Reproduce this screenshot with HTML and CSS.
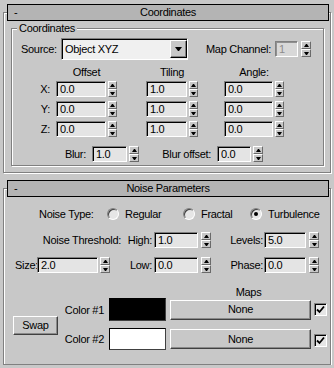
FILE: index.html
```html
<!DOCTYPE html>
<html lang="en">
<head>
    <meta charset="UTF-8">
    <title>Noise - Material Editor</title>
    <link rel="stylesheet" href="styles.css">
</head>
<body>

    <!-- Coordinates rollout -->
    <div class="rollout">
        <div class="rollout-head"><span class="toggle">-</span><span class="title">Coordinates</span><span></span></div>

        <fieldset class="group">
            <legend>Coordinates</legend>

            <div class="source-row">
                <span class="src-label">Source:</span>
                <div class="dropdown"><span>Object XYZ</span><span class="drop-btn"></span></div>
                <span class="chan-label">Map Channel:</span>
                <div class="field loose">
                    <input class="num w-chan" value="1" disabled>
                    <span class="spin wide"><i class="up"></i><i class="down"></i></span>
                </div>
            </div>

            <div class="xyz">
                <span></span>
                <span class="col-head w-offset-f">Offset</span>
                <span class="col-head w-tiling-f">Tiling</span>
                <span class="col-head w-angle-f">Angle:</span>

                <span class="axis">X:</span>
                <div class="field"><input class="num w-offset" value="0.0"><span class="spin"><i class="up"></i><i class="down"></i></span></div>
                <div class="field"><input class="num w-tiling" value="1.0"><span class="spin"><i class="up"></i><i class="down"></i></span></div>
                <div class="field"><input class="num w-angle" value="0.0"><span class="spin"><i class="up"></i><i class="down"></i></span></div>

                <span class="axis">Y:</span>
                <div class="field"><input class="num w-offset" value="0.0"><span class="spin"><i class="up"></i><i class="down"></i></span></div>
                <div class="field"><input class="num w-tiling" value="1.0"><span class="spin"><i class="up"></i><i class="down"></i></span></div>
                <div class="field"><input class="num w-angle" value="0.0"><span class="spin"><i class="up"></i><i class="down"></i></span></div>

                <span class="axis">Z:</span>
                <div class="field"><input class="num w-offset" value="0.0"><span class="spin"><i class="up"></i><i class="down"></i></span></div>
                <div class="field"><input class="num w-tiling" value="1.0"><span class="spin"><i class="up"></i><i class="down"></i></span></div>
                <div class="field"><input class="num w-angle" value="0.0"><span class="spin"><i class="up"></i><i class="down"></i></span></div>
            </div>

            <div class="blur-row">
                <span class="blur-label">Blur:</span>
                <div class="field"><input class="num w-blur" value="1.0"><span class="spin wide"><i class="up"></i><i class="down"></i></span></div>
                <span class="blur-off-label">Blur offset:</span>
                <div class="field"><input class="num w-blur-off" value="0.0"><span class="spin wide"><i class="up"></i><i class="down"></i></span></div>
            </div>
        </fieldset>
    </div>

    <!-- Noise Parameters rollout -->
    <div class="rollout second">
        <div class="rollout-head"><span class="toggle">-</span><span class="title">Noise Parameters</span><span></span></div>

        <div class="type-row">
            <span class="type-label">Noise Type:</span>
            <label class="option w-regular"><span class="radio"></span>Regular</label>
            <label class="option w-fractal"><span class="radio"></span>Fractal</label>
            <label class="option"><span class="radio checked"></span>Turbulence</label>
        </div>

        <div class="params">
            <span class="right pr-thresh">Noise Threshold:</span>
            <span class="right pr-hl">High:</span>
            <div class="field loose"><input class="num w-thresh" value="1.0"><span class="spin wide"><i class="up"></i><i class="down"></i></span></div>
            <span class="right pr-lp">Levels:</span>
            <div class="field loose"><input class="num w-levels" value="5.0"><span class="spin wide"><i class="up"></i><i class="down"></i></span></div>

            <div class="size-cell">
                <span class="size-label">Size:</span>
                <div class="field"><input class="num w-size" value="2.0"><span class="spin wide"><i class="up"></i><i class="down"></i></span></div>
            </div>
            <span class="right pr-hl">Low:</span>
            <div class="field loose"><input class="num w-thresh" value="0.0"><span class="spin wide"><i class="up"></i><i class="down"></i></span></div>
            <span class="right pr-lp">Phase:</span>
            <div class="field loose"><input class="num w-levels" value="0.0"><span class="spin wide"><i class="up"></i><i class="down"></i></span></div>
        </div>

        <div class="colors">
            <span class="maps-head">Maps</span>

            <button class="btn swap">Swap</button>

            <span class="color-label">Color #1</span>
            <span class="swatch black"></span>
            <button class="btn map-btn">None</button>
            <span class="check"><svg width="9" height="9" viewBox="0 0 9 9"><path d="M1 4.5 L3.5 7 L8 1.5" fill="none" stroke="#000" stroke-width="1.8"/></svg></span>

            <span class="color-label row-2">Color #2</span>
            <span class="swatch white row-2"></span>
            <button class="btn map-btn row-2">None</button>
            <span class="check row-2"><svg width="9" height="9" viewBox="0 0 9 9"><path d="M1 4.5 L3.5 7 L8 1.5" fill="none" stroke="#000" stroke-width="1.8"/></svg></span>
        </div>
    </div>

</body>
</html>
```

FILE: styles.css
```css
/* Base */
* {
    box-sizing: border-box;
}

body {
    margin: 0;
    width: 334px;
    background-color: #c8c8c8;
    font: 11px/13px "Liberation Sans", Arial, sans-serif;
    letter-spacing: -0.3px;
    color: #000;
}

/* Rollout frame (etched) */
.rollout {
    margin: 12px 3px 0;
    padding-bottom: 0;
    border: 1px solid #808080;
    box-shadow: inset 1px 1px 0 #fff, 1px 1px 0 #fff;
}

.rollout.second {
    margin-top: 15px;
    padding-bottom: 14px;
}

.rollout-head {
    display: grid;
    grid-template-columns: 20px 1fr 20px;
    height: 17px;
    margin: -9px 1px 0 3px;
    border: 1px solid #000;
    background-color: #b4b4b4;
    line-height: 15px;
}

.rollout-head .toggle {
    padding-left: 6px;
}

.rollout-head .title {
    text-align: center;
}

/* Group box */
.group {
    margin: 1px 6px 6px 7px;
    padding: 0 0 3px 0;
    min-width: 0;
    border: 1px solid #808080;
    box-shadow: inset 1px 1px 0 #fff, 1px 1px 0 #fff;
}

.group legend {
    margin-left: 5px;
    padding: 0 2px;
    line-height: 13px;
    background-color: #c8c8c8;
}

/* Inputs */
.field {
    display: flex;
    align-items: center;
    gap: 2px;
}

.field.loose {
    gap: 3px;
}

.num {
    height: 16px;
    margin: 0;
    padding: 0 0 0 3px;
    border: 1px solid;
    border-color: #808080 #fff #fff #808080;
    box-shadow: inset 1px 1px 0 #000;
    background-color: #e4e4e4;
    font: inherit;
    letter-spacing: inherit;
    color: #000;
    outline: none;
}

.num:disabled {
    background-color: #d8d8d8;
    box-shadow: inset 1px 1px 0 #909090;
    color: #8c8c8c;
}

.w-chan { width: 23px; }
.w-offset { width: 50px; }
.w-tiling { width: 41px; }
.w-angle { width: 49px; }
.w-blur { width: 35px; }
.w-blur-off { width: 34px; }
.w-thresh { width: 44px; }
.w-levels { width: 42px; }
.w-size { width: 61px; }

/* Spinner buttons */
.spin {
    display: flex;
    flex-direction: column;
    width: 9px;
    height: 16px;
}

.spin.wide {
    width: 10px;
}

.spin i {
    flex: 1;
    display: flex;
    align-items: center;
    justify-content: center;
    border: 1px solid;
    border-color: #fff #6a6a6a #6a6a6a #fff;
    background-color: #c8c8c8;
}

.spin i::before {
    content: "";
    width: 1px;
    border-left: 2px solid transparent;
    border-right: 2px solid transparent;
}

.spin .up::before {
    border-bottom: 3px solid #000;
}

.spin .down::before {
    border-top: 3px solid #000;
}

/* Source row */
.source-row {
    display: flex;
    align-items: center;
    height: 22px;
    margin-top: 3px;
}

.src-label {
    width: 49px;
    padding-left: 9px;
}

.dropdown {
    display: flex;
    align-items: center;
    justify-content: space-between;
    width: 127px;
    height: 22px;
    padding-left: 3px;
    border: 1px solid;
    border-color: #808080 #fff #fff #808080;
    box-shadow: inset 1px 1px 0 #000;
    background-color: #f0f0f0;
}

.drop-btn {
    display: flex;
    align-items: center;
    justify-content: center;
    width: 17px;
    height: 18px;
    border: 1px solid;
    border-color: #fff #000 #000 #fff;
    box-shadow: inset -1px -1px 0 #808080;
    background-color: #c8c8c8;
}

.drop-btn::before {
    content: "";
    width: 1px;
    border-left: 3px solid transparent;
    border-right: 3px solid transparent;
    border-top: 4px solid #000;
}

.chan-label {
    width: 69px;
    margin-left: 18px;
}

/* Offset / Tiling / Angle grid */
.xyz {
    display: grid;
    grid-template-columns: 44px 90px 78px 1fr;
    grid-template-rows: 11px repeat(3, 16px);
    row-gap: 4px;
    margin-top: 6px;
}

.col-head {
    text-align: center;
    white-space: nowrap;
}

.w-offset-f { width: 61px; }
.w-tiling-f { width: 52px; }
.w-angle-f { width: 60px; }

.axis {
    padding-right: 6px;
    text-align: right;
    line-height: 16px;
}

/* Blur row */
.blur-row {
    display: flex;
    align-items: center;
    height: 16px;
    margin-top: 9px;
}

.blur-label {
    width: 80px;
    padding-right: 6px;
    text-align: right;
}

.blur-off-label {
    width: 78px;
    padding-right: 6px;
    text-align: right;
}

/* Noise type */
.type-row {
    display: flex;
    align-items: center;
    height: 16px;
    margin-top: 9px;
    padding-left: 35px;
}

.type-label {
    width: 68px;
}

.option {
    display: flex;
    align-items: center;
}

.w-regular { width: 76px; }
.w-fractal { width: 67px; }

.radio {
    position: relative;
    width: 12px;
    height: 12px;
    margin-right: 6px;
    border: 1px solid;
    border-color: #808080 #fff #fff #808080;
    border-radius: 50%;
    box-shadow: inset 1px 1px 0 #404040;
    background-color: #e6e6e6;
}

.radio.checked::after {
    content: "";
    position: absolute;
    top: 3px;
    left: 3px;
    width: 4px;
    height: 4px;
    border-radius: 50%;
    background-color: #000;
}

/* Threshold / size grid */
.params {
    display: grid;
    grid-template-columns: 121px 29px 57px 53px 55px;
    grid-auto-rows: 16px;
    row-gap: 9px;
    margin-top: 10px;
    line-height: 16px;
}

.right {
    text-align: right;
    white-space: nowrap;
}

.pr-thresh { padding-right: 4px; }
.pr-hl { padding-right: 2px; }
.pr-lp { padding-right: 1px; }

.size-cell {
    display: flex;
    align-items: center;
    padding-left: 11px;
}

.size-label {
    width: 22px;
}

/* Colors and maps */
.colors {
    display: grid;
    grid-template-columns: 60px 45px 61px 144px 13px;
    grid-template-rows: 12px 23px 29px;
    margin-top: 13px;
}

.maps-head {
    grid-column: 4 / 6;
    text-align: center;
    line-height: 12px;
}

.btn {
    margin: 0;
    padding: 0;
    border: 1px solid;
    border-color: #fff #404040 #404040 #fff;
    box-shadow: inset -1px -1px 0 #8a8a8a;
    background-color: #c8c8c8;
    font: inherit;
    letter-spacing: inherit;
    color: #000;
}

.swap {
    grid-column: 1;
    grid-row: 2 / 4;
    align-self: center;
    width: 45px;
    height: 19px;
    margin: 3px 0 0 9px;
}

.color-label {
    grid-column: 2;
    padding-right: 5px;
    text-align: right;
    white-space: nowrap;
    line-height: 22px;
    align-self: center;
}

.swatch {
    width: 57px;
    height: 23px;
    border: 1px solid;
    border-color: #000 #404040 #404040 #000;
}

.swatch.black {
    background-color: #000;
}

.swatch.white {
    height: 22px;
    background-color: #fff;
}

.map-btn {
    width: 141px;
    height: 20px;
    align-self: center;
}

.check {
    display: flex;
    align-items: center;
    justify-content: center;
    width: 13px;
    height: 13px;
    align-self: center;
    border: 1px solid;
    border-color: #808080 #fff #fff #808080;
    box-shadow: inset 1px 1px 0 #000;
    background-color: #e6e6e6;
}

.row-2 {
    grid-row: 3;
    align-self: end;
}

.check.row-2 {
    margin-bottom: 3px;
}

.map-btn.row-2 {
    margin-bottom: 1px;
}

.color-label.row-2 {
    align-self: end;
}
```
